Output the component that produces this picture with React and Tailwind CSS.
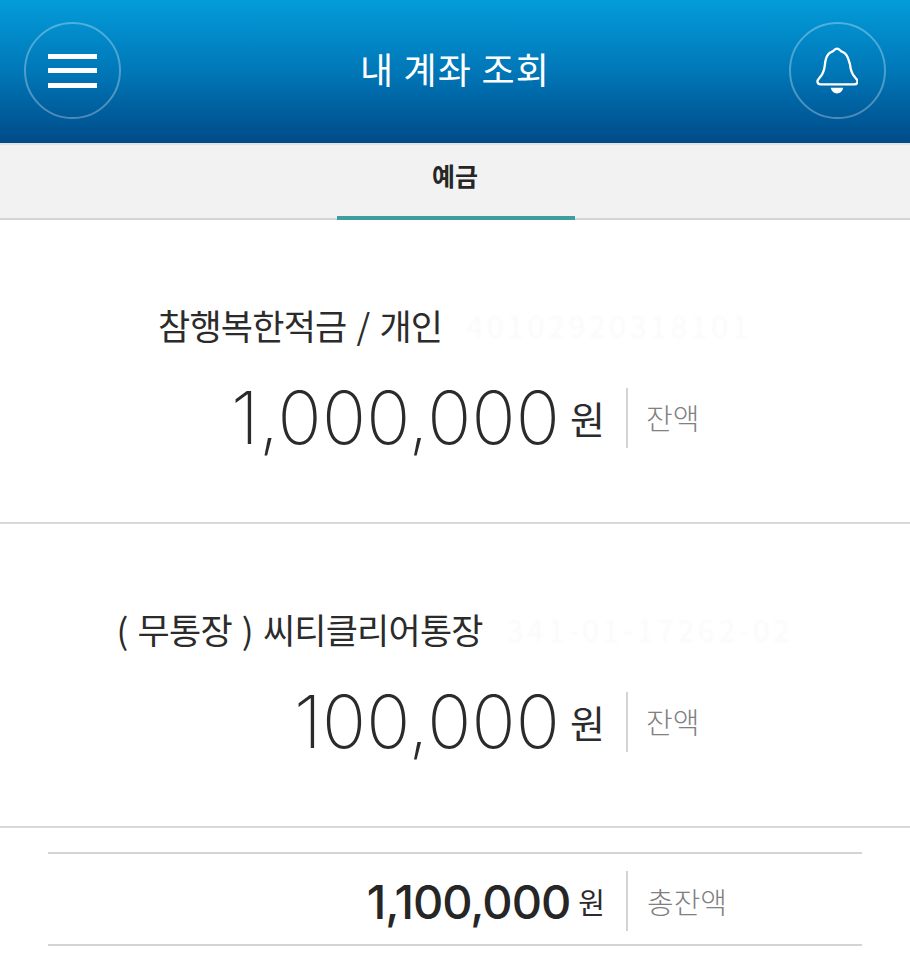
import React from 'react';

const KR = "font-['Noto_Sans_CJK_KR','Noto_Sans',sans-serif]";

const accounts = [
  { name: '참행복한적금 / 개인', number: '40102920318101', amount: '1,000,000' },
  { name: '( 무통장 ) 씨티클리어통장', number: '341-01-17262-02', amount: '100,000' },
];

const BellIcon = () => (
  <svg width="42" height="48" viewBox="0 0 44 50" fill="none" className="text-white">
    <path
      d="M22 1.500c-2 0-3 1.600-4.200 2.700-1 .9-2.800 1.200-4.300 2.600C10.500 9.500 9.800 13 9.300 18.500c-.5 5-1.500 8.500-4.500 12.300-1.500 1.900-3.300 3.300-3.300 5 0 2 1.500 3.200 3.500 3.200h35c2 0 3.500-1.200 3.500-3.200 0-1.700-1.800-3.100-3.300-5-3-3.800-4-7.300-4.500-12.300C34.200 13 33.500 9.500 30.500 6.800c-1.500-1.400-3.300-1.700-4.300-2.600C25 3.100 24 1.500 22 1.500Z"
      stroke="currentColor"
      strokeWidth="2.400"
      strokeLinejoin="round"
    />
    <path d="M15.500 42.500h13c-.6 3.500-3.200 6-6.500 6s-5.900-2.500-6.500-6Z" fill="currentColor" />
  </svg>
);

const AmountRow = ({ amount, unitLabel, total }) => (
  <div className="flex items-center">
    <div className={`flex items-center justify-end ${total ? 'w-[557px]' : 'w-[605px]'}`}>
      {total ? (
        <span className="font-['Inter',sans-serif] text-[47px] leading-none font-medium tracking-[-1px] text-[#262626]">{amount}</span>
      ) : (
        <span className="font-['Inter',sans-serif] text-[73px] leading-none font-extralight tracking-[0.2px] text-[#2b2b2b]">{amount}</span>
      )}
      <span className={`${KR} ${total ? 'ml-[8px] text-[29px]' : 'ml-[10px] text-[38px]'} leading-none text-[#2b2b2b]`}>원</span>
    </div>
    <div className="ml-[21px] h-[60px] w-[2px] bg-[#d4d4d4]" />
    <span className={`${KR} ${total ? 'ml-[19px]' : 'ml-[18px]'} text-[29px] leading-none font-light text-[#808080]`}>{unitLabel}</span>
  </div>
);

export default function App() {
  return (
    <div className={`h-[960px] w-[910px] overflow-hidden bg-white ${KR}`}>
      {/* Header */}
      <header className="flex h-[143px] items-start justify-between bg-gradient-to-b from-[#049cda] via-[#0077b7] to-[#004b89] px-[24px] pt-[22px]">
        <button className="flex h-[97px] w-[97px] flex-col items-center justify-center gap-[9.500px] rounded-full border-2 border-white/30">
          <span className="h-[5px] w-[49px] bg-white" />
          <span className="h-[5px] w-[49px] bg-white" />
          <span className="h-[5px] w-[49px] bg-white" />
        </button>
        <h1 className="mt-[21px] text-[36px] leading-[50px] font-normal tracking-[1.200px] text-white">내 계좌 조회</h1>
        <button className="flex h-[97px] w-[97px] items-center justify-center rounded-full border-2 border-white/30">
          <BellIcon />
        </button>
      </header>

      {/* Tab */}
      <nav className="relative flex h-[77px] justify-center border-t-2 border-b-2 border-t-[#dfe3e8] border-b-[#d4d4d4] bg-[#f2f2f2]">
        <div className="relative ml-[2px] flex w-[238px] items-center justify-center pr-[2px] pb-[11px] text-[25px] font-bold text-[#262626]">
          예금
          <span className="absolute inset-x-0 bottom-[-2px] h-[4px] bg-[#3d9e9f]" />
        </div>
      </nav>

      {/* Accounts */}
      {accounts.map((account) => (
        <section key={account.name} className="flex h-[304px] flex-col items-center border-b-2 border-[#d9d9d9] pt-[80px]">
          <div className="flex items-center gap-[24px] text-[35px] leading-[50px] tracking-[-0.800px] text-[#2b2b2b]">
            <span className="[word-spacing:3px]">{account.name}</span>
            <span className="text-[31px] tracking-[3.200px] whitespace-nowrap text-[#fafafa] blur-[1px]">{account.number}</span>
          </div>
          <div className="mt-[31px] w-full">
            <AmountRow amount={account.amount} unitLabel="잔액" />
          </div>
        </section>
      ))}

      {/* Total */}
      <section className="mx-[48px] mt-[24px] flex h-[94px] items-center border-t-2 border-b-2 border-[#d4d4d4] pt-[4px]">
        <AmountRow amount="1,100,000" unitLabel="총잔액" total />
      </section>
    </div>
  );
}
